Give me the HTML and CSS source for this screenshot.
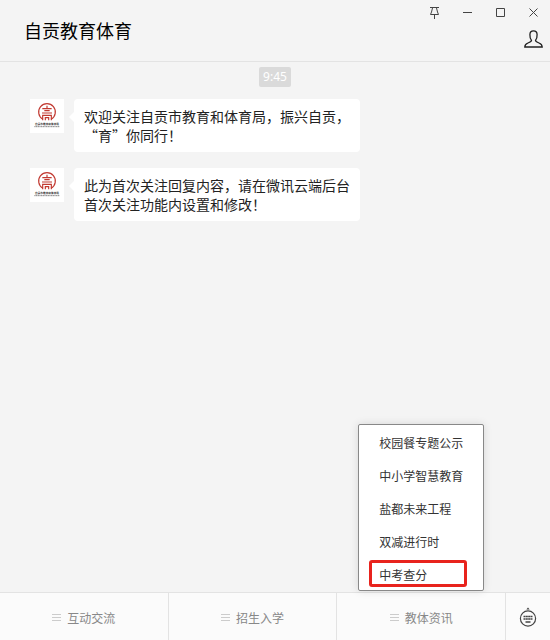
FILE: index.html
```
<!DOCTYPE html>
<html lang="zh-CN">
<head>
    <meta charset="utf-8">
    <meta name="viewport" content="width=device-width, initial-scale=1">
    <title>自贡教育体育</title>
    <link rel="stylesheet" href="styles.css">
</head>

<body>

<svg class="symbols" aria-hidden="true">
    <symbol id="logo" viewBox="0 0 102 102">
        <g fill="none" stroke="#c23a32" stroke-width="3.500">
            <path d="M39 61 A25 25 0 1 1 63 61"/>
            <path d="M51 20v7M37 29h28M43 35h16M36 42h30M38 64V49h26v15M46 64V56h10v8" />
        </g>
        <text x="51" y="79" text-anchor="middle" font-size="8" font-weight="700" fill="#333">自贡市教育和体育局</text>
        <path d="M13 83h76" stroke="#888" stroke-width="3" stroke-dasharray="4 1"/>
    </symbol>
</svg>

<div class="window">

    <header class="header">
        <h1 class="title">自贡教育体育</h1>
        <div class="window_buttons">
            <button type="button" class="icon_button" aria-label="置顶">
                <svg width="11" height="13" viewBox="0 0 11 13" fill="none" stroke="#444"><path d="M1 1.500h9M3.500 2L2.500 6 1.500 8.500h8L8.500 6 7.500 2M5.500 9v4"/></svg>
            </button>
            <button type="button" class="icon_button" aria-label="最小化">
                <svg width="11" height="13" viewBox="0 0 11 13" fill="none" stroke="#444"><path d="M1 6.500h9"/></svg>
            </button>
            <button type="button" class="icon_button" aria-label="最大化">
                <svg width="11" height="13" viewBox="0 0 11 13" fill="none" stroke="#444"><path d="M1.500 2.500h8v8h-8z"/></svg>
            </button>
            <button type="button" class="icon_button" aria-label="关闭">
                <svg width="11" height="13" viewBox="0 0 11 13" fill="none" stroke="#444"><path d="M1.500 2.500l8 8M9.500 2.500l-8 8"/></svg>
            </button>
        </div>
        <button type="button" class="icon_button profile" aria-label="公众号资料">
            <svg width="19" height="18" viewBox="0 0 19 18" fill="none" stroke="#222" stroke-width="1.300"><path d="M7.500 10.300C6 8.500 5.800 6.500 5.900 4.500 6 2.200 7.500.9 9.500.9s3.500 1.300 3.600 3.600c.1 2-.1 4-1.600 5.800 0 1.300.8 1.700 3.500 2.700 2.300.9 3.200 1.700 3.200 4H.8c0-2.300.9-3.100 3.200-4 2.700-1 3.500-1.400 3.500-2.700z"/></svg>
        </button>
    </header>

    <main class="chat">
        <time class="time">9:45</time>

        <div class="message">
            <svg class="avatar" role="img" aria-label="自贡教育体育"><use href="#logo"/></svg>
            <p class="bubble">欢迎关注自贡市教育和体育局，振兴自贡，“育”你同行！</p>
        </div>

        <div class="message">
            <svg class="avatar" role="img" aria-label="自贡教育体育"><use href="#logo"/></svg>
            <p class="bubble">此为首次关注回复内容，请在微讯云端后台首次关注功能内设置和修改！</p>
        </div>
    </main>

    <footer class="footer">
        <div class="tab">
            <button type="button" class="tab_button"><span class="lines"></span>互动交流</button>
        </div>
        <div class="tab">
            <button type="button" class="tab_button"><span class="lines"></span>招生入学</button>
        </div>
        <div class="tab">
            <button type="button" class="tab_button" aria-expanded="true"><span class="lines"></span>教体资讯</button>
            <ul class="menu">
                <li><a href="#">校园餐专题公示</a></li>
                <li><a href="#">中小学智慧教育</a></li>
                <li><a href="#">盐都未来工程</a></li>
                <li><a href="#">双减进行时</a></li>
                <li class="marked"><a href="#">中考查分</a></li>
            </ul>
        </div>
        <button type="button" class="keyboard" aria-label="键盘">
            <svg width="18" height="20" viewBox="0 0 18 20" fill="none" stroke="#444"><circle cx="9" cy="11.500" r="7.600" stroke-width="1.200"/><path d="M7.300 2.500L9 .5 10.700 2.500z" fill="#444" stroke="none"/><path d="M4.500 9.500h9M4.500 12h9" stroke-width="1.500" stroke-dasharray="2 .333"/><path d="M6.500 15h5" stroke-width="1.500"/></svg>
        </button>
    </footer>

</div>

</body>
</html>
```

FILE: styles.css
```
*, *::before, *::after {
    box-sizing: border-box;
}

body {
    margin: 0;
    background: #f4f4f4;
    color: #222;
    font-family: "Noto Sans CJK SC", "Noto Sans", sans-serif;
    font-size: 14px;
}

button {
    margin: 0;
    padding: 0;
    border: 0;
    background: none;
    color: inherit;
    font: inherit;
    cursor: pointer;
}

.symbols {
    display: none;
}

.window {
    display: flex;
    flex-direction: column;
    min-height: 100vh;
}

/* title bar */

.header {
    display: grid;
    grid-template-columns: 1fr auto;
    grid-template-rows: 25px 36px;
    border-bottom: 1px solid #e3e3e3;
}

.title {
    grid-row: 1 / 3;
    align-self: center;
    margin: 0;
    padding: 0 0 2px 24px;
    color: #000;
    font-size: 18px;
    font-weight: 400;
}

.window_buttons {
    display: flex;
    gap: 22px;
    align-items: center;
    padding-right: 11px;
}

.icon_button svg {
    display: block;
}

.profile {
    grid-column: 2;
    justify-self: end;
    align-self: start;
    padding: 5px 7px;
}

/* conversation */

.chat {
    display: flex;
    flex: 1;
    flex-direction: column;
    padding: 5px 30px 16px;
}

.time {
    align-self: center;
    margin-bottom: 12px;
    padding: 0 4px;
    border-radius: 2px;
    background: #dadada;
    color: #fff;
    font: 12px/20px "Noto Sans", sans-serif;
}

.message {
    display: flex;
    gap: 10px;
    align-items: flex-start;
    margin-bottom: 16px;
}

.avatar {
    flex: none;
    width: 34px;
    height: 34px;
    background: #fff;
}

.bubble {
    position: relative;
    max-width: 286px;
    margin: 0;
    padding: 8px 10px 7px;
    border-radius: 4px;
    background: #fff;
    line-height: 19px;
}

.bubble::before {
    content: "";
    position: absolute;
    top: 13px;
    left: -5px;
    border: 5px solid transparent;
    border-right-color: #fff;
    border-left: 0;
}

/* bottom tabs */

.footer {
    display: flex;
    height: 48px;
    border-top: 1px solid #e3e3e3;
    background: #fbfbfb;
    color: #888;
    font-size: 12px;
}

.tab {
    position: relative;
    flex: 1;
    border-right: 1px solid #e3e3e3;
}

.tab_button {
    display: flex;
    gap: 6px;
    align-items: center;
    justify-content: center;
    width: 100%;
    height: 100%;
    padding-top: 1px;
}

.lines {
    width: 9px;
    height: 7px;
    border: solid #ccc;
    border-width: 1px 0;
    background: linear-gradient(#ccc, #ccc) center / 100% 1px no-repeat;
}

.keyboard {
    flex: none;
    width: 44px;
}

.keyboard svg {
    display: block;
    margin: 0 auto;
}

/* popup over the third tab */

.menu {
    position: absolute;
    bottom: 100%;
    left: 50%;
    display: flex;
    flex-direction: column;
    gap: 16px;
    width: 126px;
    margin: 0 0 2px -63px;
    padding: 9px 20px 7px;
    border: 1px solid #888;
    border-radius: 2px;
    background: #fff;
    box-shadow: 0 0 8px rgba(0, 0, 0, 0.12);
    line-height: 17px;
    list-style: none;
}

.menu a {
    color: #333;
    text-decoration: none;
    white-space: nowrap;
}

.marked {
    position: relative;
}

.marked::after {
    content: "";
    position: absolute;
    top: -6px;
    left: -10px;
    width: 98px;
    height: 27px;
    border: 3px solid #e8231d;
    border-radius: 3px;
    pointer-events: none;
}
```
